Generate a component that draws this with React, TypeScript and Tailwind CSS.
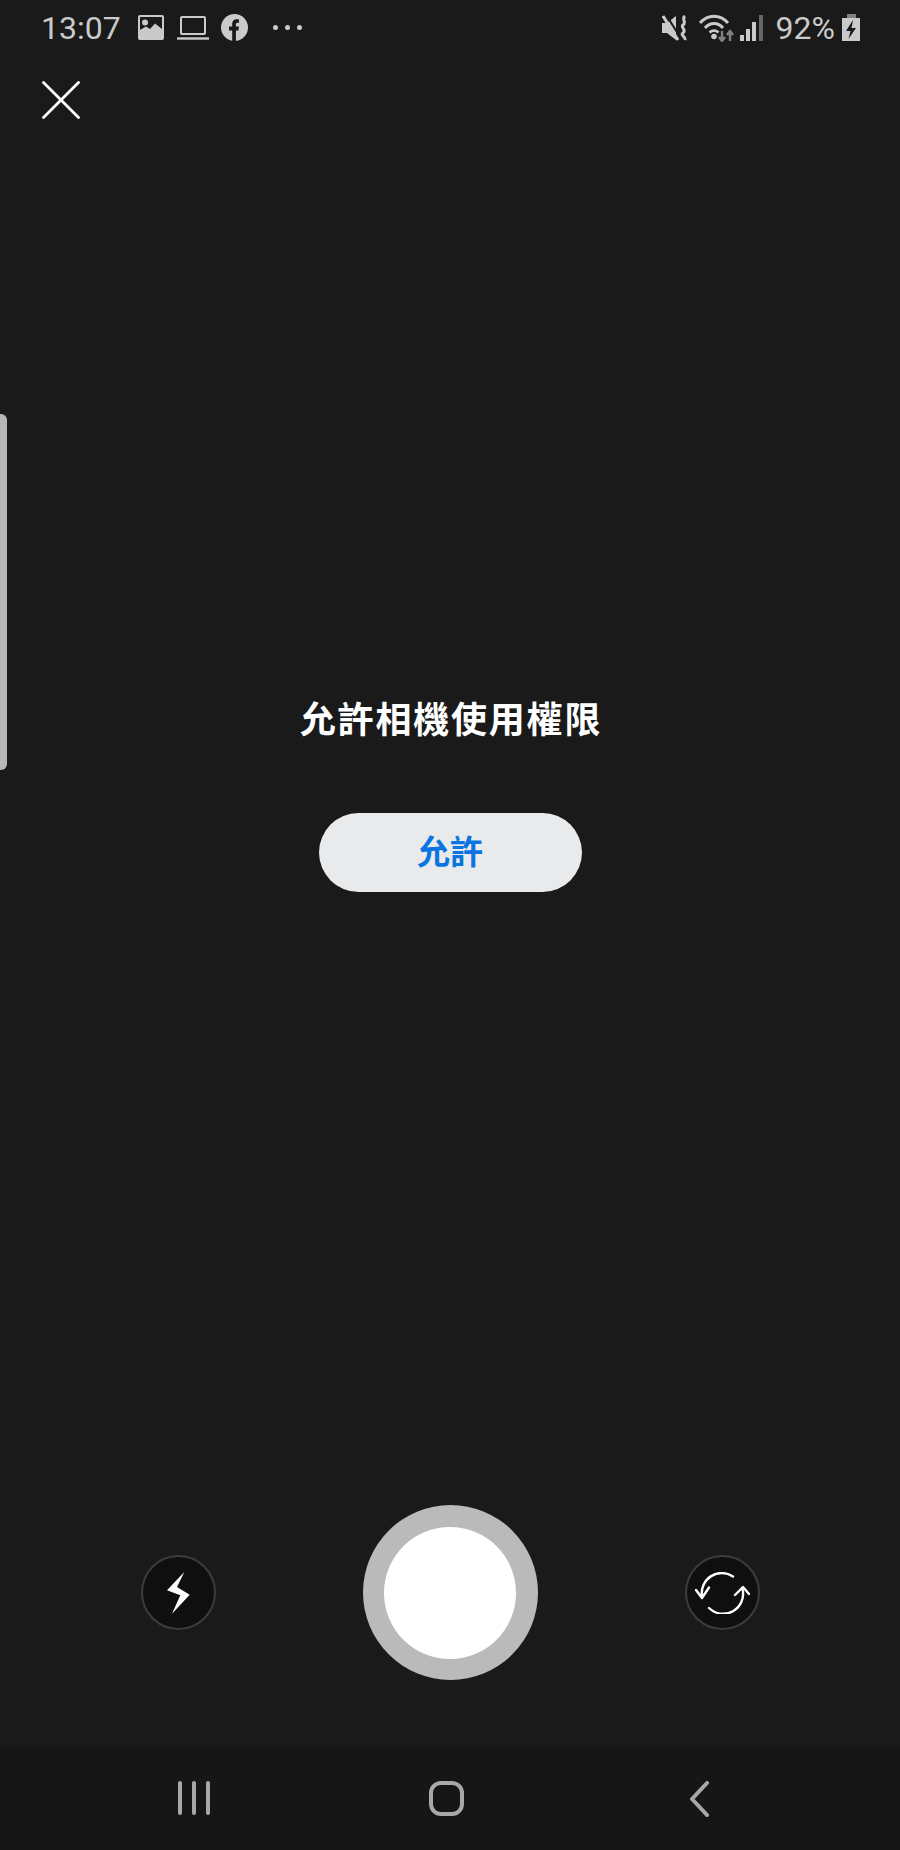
import React from 'react';

function ImageIcon() {
  return (
    <svg width="26" height="26" viewBox="0 0 26 26" className="ml-[17px]">
      <rect x="0" y="0" width="26" height="25" rx="2" fill="#cacaca" />
      <rect x="2" y="2" width="22" height="16" fill="#1a1a1a" />
      <circle cx="7" cy="7.5" r="3" fill="#cacaca" />
      <path d="M2 18 L2 15 L8 11.5 L12 14 L17 8.5 L24 14 L24 18 Z" fill="#cacaca" />
    </svg>
  );
}

function LaptopIcon() {
  return (
    <svg width="32" height="25" viewBox="0 0 32 25" className="ml-[13px]" fill="none" stroke="#cacaca">
      <rect x="4" y="2" width="24" height="17" rx="1" strokeWidth="2" />
      <path d="M0 23.5 H32" strokeWidth="2.4" />
    </svg>
  );
}

function FacebookIcon() {
  return (
    <svg width="27" height="27" viewBox="0 0 27 27" className="ml-[12px]">
      <circle cx="13.5" cy="13.5" r="13.5" fill="#cacaca" />
      <path
        d="M11.2 27 V16.5 H8 V12.5 H11.2 V9.8 C11.2 6.8 13 5.2 15.6 5.2 C16.8 5.2 18 5.4 18 5.4 V8.8 H16.5 C15 8.8 14.9 9.7 14.9 10.6 V12.5 H18 L17.4 16.5 H14.9 V27 Z"
        fill="#1a1a1a"
      />
    </svg>
  );
}

function MuteIcon() {
  return (
    <svg width="26" height="26" viewBox="0 0 26 26">
      <path d="M0 8 H5 L14 1 V25 L5 18 H0 Z" fill="#cacaca" />
      <path d="M3 -2 L18 22" stroke="#1a1a1a" strokeWidth="2" />
      <path d="M1 1 L16 25" stroke="#cacaca" strokeWidth="3" />
      <path d="M23 1 C19 4 25 7 21 10 C18 12 25 15 21 18 C18 20 24 22 23 25" fill="none" stroke="#cacaca" strokeWidth="3" />
    </svg>
  );
}

function WifiIcon() {
  return (
    <svg width="35" height="28" viewBox="0 0 35 28" fill="none">
      <path d="M1 9 C9 0 21 0 29 9" stroke="#cacaca" strokeWidth="3" />
      <path d="M6 14 C11 8 19 8 24 14" stroke="#cacaca" strokeWidth="3" />
      <path d="M10.5 18.5 C13 16 17 16 19.5 18.5" stroke="#cacaca" strokeWidth="2.6" />
      <circle cx="15" cy="22.5" r="2.8" fill="#cacaca" />
      <path d="M23 17 V26 M20 23 L23 27 L26 23" stroke="#808080" strokeWidth="2.4" />
      <path d="M31 27 V18 M28 21 L31 17 L34 21" stroke="#808080" strokeWidth="2.4" />
    </svg>
  );
}

function SignalIcon() {
  return (
    <svg width="23" height="26" viewBox="0 0 23 26">
      <rect x="0" y="20" width="4" height="6" fill="#cacaca" />
      <rect x="6" y="14" width="4" height="12" fill="#cacaca" />
      <rect x="12" y="7" width="4" height="19" fill="#cacaca" />
      <rect x="19" y="0" width="4" height="26" fill="#666666" />
    </svg>
  );
}

function BatteryIcon() {
  return (
    <svg width="19" height="27" viewBox="0 0 19 27">
      <path d="M5 0 H14 V4 H5 Z" fill="#808080" />
      <path d="M0 4 H18 V27 H0 Z" fill="#cacaca" />
      <path d="M11 6 L4 17 H8.5 L6.5 25 L14 14 H9.5 Z" fill="#1a1a1a" />
    </svg>
  );
}

function FlashIcon() {
  return (
    <svg width="23" height="42" viewBox="0 0 23 42">
      <path d="M17.3 0 L0 18.3 L13.3 23.3 L5 41.7 L22.7 22.7 L10 15 Z" fill="#ffffff" />
    </svg>
  );
}

function SwitchCameraIcon() {
  return (
    <svg width="55" height="42" viewBox="0 0 55 42" fill="none" stroke="#ffffff" strokeWidth="2.4" strokeLinecap="round" strokeLinejoin="round">
      <path d="M38 4.5 A20 20 0 0 0 7 24" />
      <path d="M1 18 L7 26 L14 15.5" />
      <path d="M14 36 A20 20 0 0 0 47.5 17" />
      <path d="M40 23 L48 15 L54 22" />
    </svg>
  );
}

export default function App() {
  return (
    <div
      className="relative flex h-[1850px] w-[900px] flex-col overflow-hidden bg-[#1a1a1a]"
      style={{ fontFamily: 'Roboto, "Noto Sans CJK TC", sans-serif' }}
    >
      {/* edge panel handle */}
      <div className="absolute left-0 top-[414px] h-[356px] w-[7px] rounded-r-[6px] bg-[#b7b7b7]" />

      {/* status bar */}
      <div className="flex h-[54px] shrink-0 items-center pl-[41px] pr-[39px] pt-[1px] text-[#cacaca]">
        <span className="text-[32px] leading-none">13:07</span>
        <ImageIcon />
        <LaptopIcon />
        <FacebookIcon />
        <div className="ml-[25px] flex gap-[7px]">
          <span className="size-[5px] rounded-full bg-[#cacaca]" />
          <span className="size-[5px] rounded-full bg-[#cacaca]" />
          <span className="size-[5px] rounded-full bg-[#cacaca]" />
        </div>
        <div className="ml-auto flex items-center">
          <MuteIcon />
          <div className="ml-[11px]">
            <WifiIcon />
          </div>
          <div className="ml-[6px]">
            <SignalIcon />
          </div>
          <span className="ml-[13px] text-[32px] leading-none">92%</span>
          <div className="ml-[7px]">
            <BatteryIcon />
          </div>
        </div>
      </div>

      {/* close */}
      <button className="ml-[42px] mt-[27px] size-[38px] shrink-0">
        <svg width="38" height="38" viewBox="0 0 38 38" stroke="#ffffff" strokeWidth="2.8" strokeLinecap="round">
          <path d="M1.5 1.5 L36.5 36.5 M36.5 1.5 L1.5 36.5" />
        </svg>
      </button>

      {/* permission prompt */}
      <div className="flex flex-1 flex-col items-center pt-[576px]">
        <h1 className="pl-[2px] text-[36px] font-bold leading-[52px] tracking-[1.8px] text-white">允許相機使用權限</h1>
        <button className="mt-[66px] h-[79px] w-[263px] rounded-full bg-[#e9eaec] text-[33px] font-bold text-[#0a74e0]">
          允許
        </button>
      </div>

      {/* camera controls */}
      <div className="flex shrink-0 items-center justify-center gap-[147px] pb-[67px]">
        <button className="flex size-[75px] items-center justify-center rounded-full border-2 border-[#3c3c3c] bg-[#0f0f0f]">
          <FlashIcon />
        </button>
        <div className="flex size-[175px] items-center justify-center rounded-full bg-[#bababa]">
          <div className="size-[132px] rounded-full bg-white" />
        </div>
        <button className="flex size-[75px] items-center justify-center rounded-full border-2 border-[#3c3c3c] bg-[#0f0f0f]">
          <SwitchCameraIcon />
        </button>
      </div>

      {/* android nav */}
      <div className="flex h-[103px] shrink-0 items-start bg-[#161616] pl-[178px] pt-[34px]">
        <div className="flex h-[34px] gap-[10px]">
          <span className="h-full w-[4px] rounded-full bg-[#a8a8a8]" />
          <span className="h-full w-[4px] rounded-full bg-[#a8a8a8]" />
          <span className="h-full w-[4px] rounded-full bg-[#a8a8a8]" />
        </div>
        <div className="ml-[219px] h-[35px] w-[35px] rounded-[12px] border-[4px] border-[#a8a8a8]" />
        <svg width="20" height="36" viewBox="0 0 20 36" className="ml-[225px]" fill="none" stroke="#a8a8a8" strokeWidth="4" strokeLinecap="round" strokeLinejoin="round">
          <path d="M18 2 L3 18 L18 34" />
        </svg>
      </div>
    </div>
  );
}
